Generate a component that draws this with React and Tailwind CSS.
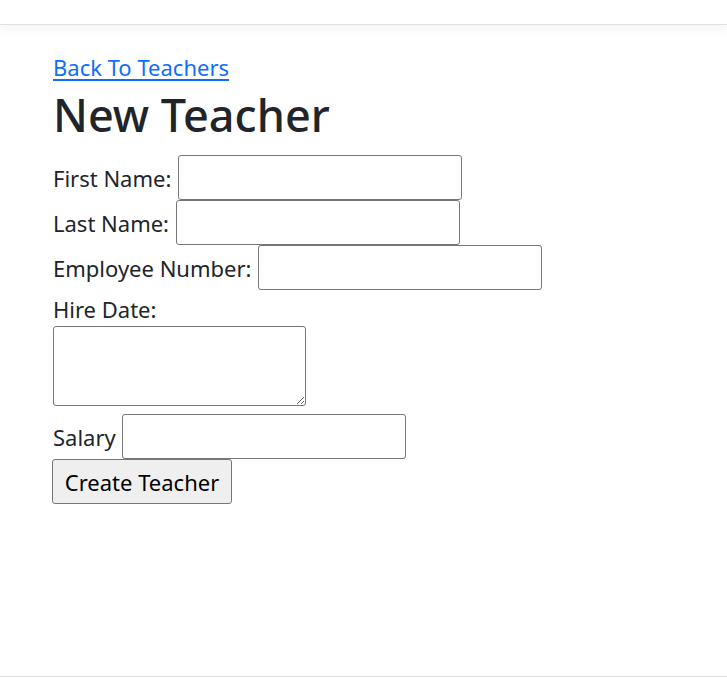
const FIELDS = [
  { label: 'First Name:', name: 'firstName' },
  { label: 'Last Name:', name: 'lastName' },
  { label: 'Employee Number:', name: 'employeeNumber' },
];

export default function App() {
  return (
    <div
      className="flex h-[678px] flex-col bg-white text-[#212529]"
      style={{ fontFamily: '"Noto Sans", "Open Sans", sans-serif' }}
    >
      <header className="relative z-10 h-[25px] border-b border-[#dee2e6] bg-white shadow-[0_4px_12px_rgba(0,0,0,0.05)]" />

      <main className="flex-1 pl-[53px] pt-[24px] text-[22px] leading-[36px]">
        <a href="#" className="block w-fit text-[#0d6efd] underline underline-offset-[3px]">
          Back To Teachers
        </a>
        <h1 className="mt-[3px] mb-[13px] text-[45px] font-medium leading-[54px]">New Teacher</h1>

        <form onSubmit={(event) => event.preventDefault()}>
          {FIELDS.map((field) => (
            <div key={field.name} className="flex h-[45px] items-center gap-[7px]">
              <label htmlFor={field.name}>{field.label}</label>
              <input
                id={field.name}
                type="text"
                className="h-[45px] w-[284px] rounded-[3px] border border-[#767676] bg-white px-[3px]"
              />
            </div>
          ))}

          <label htmlFor="hireDate" className="mt-[2px] block h-[34px] leading-[34px]">
            Hire Date:
          </label>
          <textarea
            id="hireDate"
            className="block h-[80px] w-[253px] rounded-[3px] border border-[#767676] bg-white"
          />

          <div className="mt-[8px] flex h-[45px] items-center gap-[6px]">
            <label htmlFor="salary">Salary</label>
            <input
              id="salary"
              type="text"
              className="h-[45px] w-[284px] rounded-[3px] border border-[#767676] bg-white px-[3px]"
            />
          </div>

          <button
            type="submit"
            className="-ml-px h-[45px] w-[180px] rounded-[3px] border border-[#767676] bg-[#efefef] text-black"
          >
            Create Teacher
          </button>
        </form>
      </main>

      <footer className="h-[2px] border-t border-[#dee2e6]" />
    </div>
  );
}
